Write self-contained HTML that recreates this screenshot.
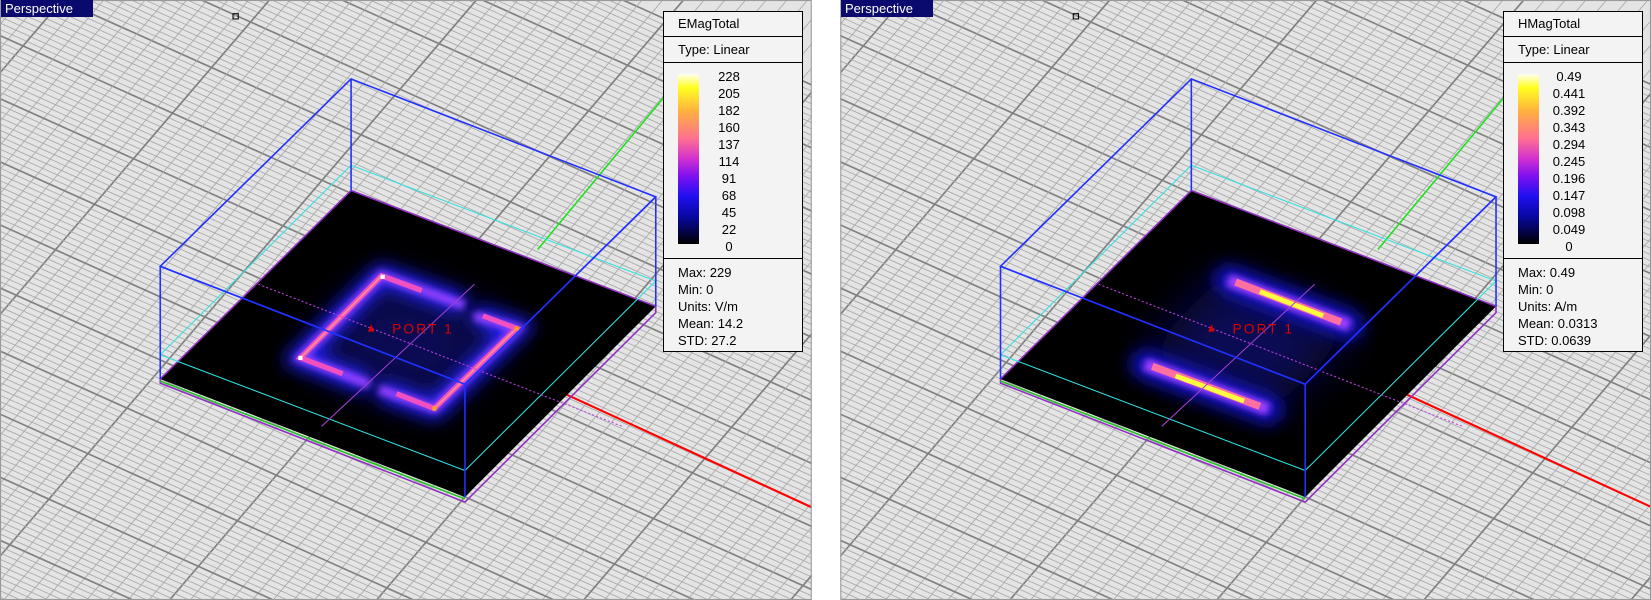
<!DOCTYPE html>
<html><head><meta charset="utf-8"><style>
html,body{margin:0;padding:0;background:#fff;overflow:hidden;}
body{width:1651px;height:600px;position:relative;overflow:hidden;font-family:"Liberation Sans",sans-serif;}
svg{position:absolute;left:0;top:0;display:block;}
.lbl{position:absolute;top:0;height:17px;line-height:17px;background:#0a0a6e;color:#fff;font-size:13px;padding:0 4px;}
.leg{position:absolute;top:11px;width:138px;height:339px;background:#f3f3f3;border:1px solid #000;font-size:13px;color:#000;}
.leg .r1{height:24px;line-height:24px;border-bottom:1px solid #000;padding-left:14px;}
.leg .r2{height:25px;line-height:25px;border-bottom:1px solid #000;padding-left:14px;}
.leg .r3{height:195px;border-bottom:1px solid #000;position:relative;}
.leg .bar{position:absolute;left:14px;top:11px;width:21px;height:170px;background:linear-gradient(#fffff0 0%,#ffff20 8%,#ffb040 22%,#ff7090 38%,#d030d0 50%,#8010f0 60%,#2010f0 72%,#0808a0 84%,#000 100%);}
.leg .nums{position:absolute;left:40px;top:5px;width:50px;text-align:center;line-height:17px;}
.leg .r4{padding:5px 0 0 14px;line-height:17px;}
</style></head><body>
<svg width="1651" height="600" viewBox="0 0 1566 570" preserveAspectRatio="none">
<defs>
<clipPath id="cl"><rect x="0" y="0" width="770" height="570"/></clipPath>
<clipPath id="plate"><polygon points="333,181 622,291 441,472 152,360"/></clipPath>
<clipPath id="plate2"><polygon points="1130,181 1419,291 1238,472 949,360"/></clipPath>
<filter id="bl" x="-50%" y="-50%" width="200%" height="200%"><feGaussianBlur stdDeviation="8"/></filter>
<filter id="bl3" x="-50%" y="-50%" width="200%" height="200%"><feGaussianBlur stdDeviation="22"/></filter>
<filter id="bl2" x="-50%" y="-50%" width="200%" height="200%"><feGaussianBlur stdDeviation="3"/></filter>
</defs>
<g id="base" clip-path="url(#cl)">
<rect x="0" y="0" width="770" height="570" fill="#e4e4e4"/>
<g id="grid"></g>
<line x1="440" y1="330" x2="770" y2="482" stroke="#ff0000" stroke-width="2"/>
<line x1="510" y1="237" x2="640" y2="80" stroke="#20e020" stroke-width="1.5"/>
<polygon points="333,181 622,291 441,472 152,360" fill="#000"/>
<polygon points="333,181 622,291 622,297 441,477 152,364 152,360" fill="none" stroke="#9030c0" stroke-width="1.5"/>
<line x1="152" y1="362" x2="441" y2="474" stroke="#20c020" stroke-width="1.5"/>
<polygon points="333,157 622,267 441,447 152,337" fill="none" stroke="#30e0e0" stroke-width="1"/>
<polygon points="333,75 622,187 441,365 152,253" fill="none" stroke="#2030ff" stroke-width="1.5"/>
<line x1="333" y1="75" x2="333" y2="181" stroke="#2030ff" stroke-width="1.5"/>
<line x1="622" y1="187" x2="622" y2="291" stroke="#2030ff" stroke-width="1.5"/>
<line x1="152" y1="253" x2="152" y2="360" stroke="#2030ff" stroke-width="1.5"/>
<rect x="221" y="13" width="5" height="5" fill="none" stroke="#000"/>
</g>
<g transform="translate(797,0)">
<use href="#base"/>
</g>
<g id="leftfield">
<g clip-path="url(#plate)">
<polygon points="362,262 490,312 412,388 285,340" fill="#0a0a60" filter="url(#bl3)" opacity="0.9"/>
<g filter="url(#bl)" fill="none" stroke="#2020ff" stroke-width="20" opacity="0.95">
<polyline points="440,290 362,262 285,340 350,365"/>
<polyline points="450,300 490,312 412,388 360,370"/>
</g>
</g>
<g filter="url(#bl2)" fill="none" stroke="#9040ff" stroke-width="9">
<polyline points="440,290 362,262 285,340 350,365"/>
<polyline points="450,300 490,312 412,388 360,370"/>
</g>
<g fill="none" stroke="#f050c0" stroke-width="5">
<polyline points="400,276 362,262 285,340 325,355"/>
<polyline points="458,300 490,312 412,388 376,374"/>
</g>
<g fill="none" stroke="#ff9090" stroke-width="1.5">
<polyline points="362,262 285,340"/><polyline points="490,312 412,388"/>
</g>
<rect x="361" y="261" width="4" height="4" fill="#fff"/><rect x="283" y="338" width="4" height="4" fill="#fff"/>
<rect x="488" y="310" width="4" height="4" fill="#ffa020"/><rect x="410" y="386" width="4" height="4" fill="#ffa020"/>
<line x1="450" y1="270" x2="305" y2="405" stroke="#a040d0" stroke-width="1"/>
<line x1="245" y1="270" x2="590" y2="405" stroke="#c040e0" stroke-width="1" stroke-dasharray="2,2"/>
<polygon points="349,315 355,315 352,308" fill="#d00"/>
<text x="372" y="317" fill="#e00000" font-size="13" font-family="Liberation Sans,sans-serif" letter-spacing="2">PORT 1</text>
<line x1="152" y1="253" x2="441" y2="365" stroke="#2030ff" stroke-width="1.5"/>
<line x1="622" y1="187" x2="441" y2="365" stroke="#2030ff" stroke-width="1.5"/>
<line x1="441" y1="365" x2="441" y2="472" stroke="#2030ff" stroke-width="1.5"/>
</g>
<g id="rightfield">
<g clip-path="url(#plate2)">
<polygon points="1159,262 1287,312 1209,388 1082,340" fill="#0a0a60" filter="url(#bl3)" opacity="0.9"/>
<g filter="url(#bl)" stroke="#1818e0" stroke-width="26" stroke-linecap="round" opacity="0.95">
<line x1="1165" y1="266" x2="1280" y2="309"/><line x1="1086" y1="346" x2="1203" y2="389"/>
</g>
</g>
<g filter="url(#bl2)" stroke="#a040ff" stroke-width="12">
<line x1="1165" y1="266" x2="1280" y2="309"/><line x1="1086" y1="346" x2="1203" y2="389"/>
</g>
<g stroke="#ff70a0" stroke-width="7">
<line x1="1172" y1="268" x2="1272" y2="306"/><line x1="1093" y1="348" x2="1195" y2="386"/>
</g>
<g stroke="#ffff40" stroke-width="4.5">
<line x1="1195" y1="277" x2="1255" y2="300"/><line x1="1115" y1="357" x2="1180" y2="381"/>
</g>
<line x1="1247" y1="270" x2="1102" y2="405" stroke="#a040d0" stroke-width="1"/>
<line x1="1042" y1="270" x2="1387" y2="405" stroke="#c040e0" stroke-width="1" stroke-dasharray="2,2"/>
<polygon points="1146,315 1152,315 1149,308" fill="#d00"/>
<text x="1169" y="317" fill="#e00000" font-size="13" font-family="Liberation Sans,sans-serif" letter-spacing="2">PORT 1</text>
<line x1="949" y1="253" x2="1238" y2="365" stroke="#2030ff" stroke-width="1.5"/>
<line x1="1419" y1="187" x2="1238" y2="365" stroke="#2030ff" stroke-width="1.5"/>
<line x1="1238" y1="365" x2="1238" y2="472" stroke="#2030ff" stroke-width="1.5"/>
</g>
<rect x="0.5" y="0.5" width="769" height="569" fill="none" stroke="#999"/>
<rect x="797.5" y="0.5" width="768" height="569" fill="none" stroke="#999"/>
</svg>
<div class="lbl" style="left:1px;width:84px;">Perspective</div>
<div class="lbl" style="left:841px;width:84px;">Perspective</div>
<div class="leg" style="left:663px;">
<div class="r1">EMagTotal</div><div class="r2">Type: Linear</div>
<div class="r3"><div class="bar"></div><div class="nums">228<br>205<br>182<br>160<br>137<br>114<br>91<br>68<br>45<br>22<br>0</div></div>
<div class="r4">Max: 229<br>Min: 0<br>Units: V/m<br>Mean: 14.2<br>STD: 27.2</div>
</div>
<div class="leg" style="left:1503px;">
<div class="r1">HMagTotal</div><div class="r2">Type: Linear</div>
<div class="r3"><div class="bar"></div><div class="nums">0.49<br>0.441<br>0.392<br>0.343<br>0.294<br>0.245<br>0.196<br>0.147<br>0.098<br>0.049<br>0</div></div>
<div class="r4">Max: 0.49<br>Min: 0<br>Units: A/m<br>Mean: 0.0313<br>STD: 0.0639</div>
</div>
<script>
(function(){
var g=document.getElementById('grid'),s='';
var ax=1,ay=0.45,bx=0.65,by=-0.76;
for(var i=-90;i<90;i++){
 var maj=(i%10==0);
 var col=maj?'#808080':'#a8a8a8',w=maj?1.6:0.8;
 var ox=441+i*13*0.62, oy=472+i*13*0.74;
 s+='<line x1="'+(ox-ax*1500)+'" y1="'+(oy-ay*1500)+'" x2="'+(ox+ax*1500)+'" y2="'+(oy+ay*1500)+'" stroke="'+col+'" stroke-width="'+w+'"/>';
 var px=441+i*15*0.95, py=472+i*15*0.42;
 s+='<line x1="'+(px-bx*1500)+'" y1="'+(py-by*1500)+'" x2="'+(px+bx*1500)+'" y2="'+(py+by*1500)+'" stroke="'+col+'" stroke-width="'+w+'"/>';
}
g.innerHTML=s;
})();
</script>
</body></html>
